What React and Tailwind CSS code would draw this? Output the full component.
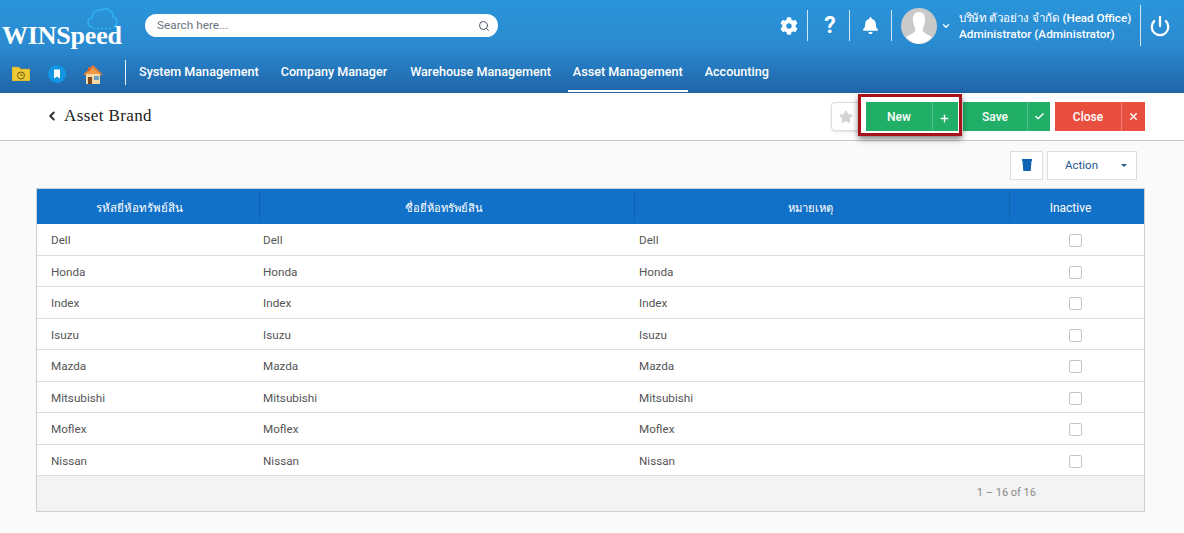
import React from 'react';
import { Check, X, Plus, Star, ChevronLeft, ChevronDown, Power, Search } from 'lucide-react';
import { FaCog, FaBell } from 'react-icons/fa';

const brands = ['Dell', 'Honda', 'Index', 'Isuzu', 'Mazda', 'Mitsubishi', 'Moflex', 'Nissan'];
const menus = [
  { label: 'System Management', cls: 'px-[11px]' },
  { label: 'Company Manager', cls: 'px-[11px]' },
  { label: 'Warehouse Management', cls: 'px-[11px] ml-[1px]' },
  { label: 'Asset Management', cls: 'border-b-2 border-white px-[5px] mx-[6px] pt-[2px]' },
  { label: 'Accounting', cls: 'px-[11px]' },
];
// header labels don't sit in the exact middle of their columns
const columns = [
  { label: 'รหัสยี่ห้อทรัพย์สิน', cls: 'pr-[18px] pt-[5px] text-[11.6px] font-medium' },
  { label: 'ชื่อยี่ห้อทรัพย์สิน', cls: 'pr-[6px] pt-[5px] text-[11.2px] font-medium' },
  { label: 'หมายเหตุ', cls: 'pr-[22px] pt-[5px] text-[11.2px] font-medium' },
  { label: 'Inactive', cls: 'pr-[12px] pt-[2px] text-xs' },
];

const Logo = () => (
  <div className="relative w-[125px] h-[50px] shrink-0">
    <svg className="absolute left-[85px] top-[4px]" width="34" height="24" viewBox="0 0 34 24" fill="none" stroke="#2fb2ee" strokeWidth="1.6">
      <path d="M8 21 C2 21 1 13 7 12 C7 6 13 3 17 4 C21 1 29 5 28 11 C33 12 33 20 28 21" />
      <path d="M8 22.5 H28" strokeDasharray="2 2" />
    </svg>
    <span className="absolute left-[2px] top-[18px] text-[26px] leading-[32px] font-bold text-white tracking-[-0.2px] font-['Liberation_Serif',serif]">WINSpeed</span>
  </div>
);

const Avatar = () => (
  <svg width="36" height="36" viewBox="0 0 36 36" className="rounded-full bg-[#c9c9c9] shrink-0">
    <path d="M18 4 C13 4 11.500 8 12 13 C12.500 17 14 20 14.500 22 C14 25 8 27 5 29 C8 33 13 36 18 36 C23 36 28 33 31 29 C28 27 22 25 21.500 22 C22 20 23.500 17 24 13 C24.500 8 23 4 18 4 Z" fill="#fff" />
  </svg>
);

const SplitButton = ({ label, icon, main, side, line, w }) => (
  <button className={`flex h-[29px] text-white text-xs font-medium ${main} ${w}`}>
    <span className="flex-1 h-full flex items-center justify-center">{label}</span>
    <span className={`h-full flex items-center justify-center border-l ${line} ${side}`}>{icon}</span>
  </button>
);

export default function App() {
  return (
    <div className="w-[1184px] h-[533px] overflow-hidden bg-[#fafafa] font-['Roboto','Noto_Sans',sans-serif]">
      <header className="h-[93px] bg-gradient-to-b from-[#2a95da] via-[#2a8ad0] to-[#2064a8] text-white">
        <div className="h-[54px] flex items-center">
          <Logo />
          <div className="ml-[20px] w-[353px] h-[23px] rounded-full bg-white flex items-center pl-[12px] pr-[8px] -mt-[3px]">
            <span className="flex-1 text-[11.8px] text-[#6b7280]">Search here...</span>
            <Search size={12} className="text-[#4b5563]" />
          </div>
          <div className="ml-auto flex items-center h-full -mt-[3px]">
            <FaCog size={18} className="mr-[9px]" />
            <div className="w-px h-[31px] bg-white/80" />
            <span className="w-[41px] pl-[3px] text-center text-[23px] leading-none font-bold">?</span>
            <div className="w-px h-[31px] bg-white/80" />
            <FaBell size={17} className="mx-[12px]" />
            <div className="w-px h-[31px] bg-white/80" />
            <div className="ml-[9px]"><Avatar /></div>
            <ChevronDown size={10} strokeWidth={3} className="ml-[4px]" />
            <div className="ml-[8px] w-[181px] text-[11.6px] font-medium leading-[16px]">
              <div className="whitespace-nowrap"><span className="tracking-[-0.35px]">บริษัท ตัวอย่าง จำกัด</span> (Head Office)</div>
              <div className="whitespace-nowrap text-[11.8px]">Administrator (Administrator)</div>
            </div>
            <div className="w-px h-[41px] bg-white/80" />
            <Power size={22} strokeWidth={2.5} className="ml-[8px] mr-[13px]" />
          </div>
        </div>
        <nav className="h-[39px] flex items-center">
          <div className="w-[125px] flex items-center shrink-0">
            <svg className="ml-[12px]" width="18" height="15" viewBox="0 0 18 15">
              <path d="M0 1 H7 L8.500 3 H18 V15 H0 Z" fill="#eec933" stroke="#b99a1f" strokeWidth="0.5" />
              <circle cx="9" cy="9.500" r="3.500" fill="none" stroke="#6b5a10" strokeWidth="1" />
              <path d="M9 7.500 V9.500 H11" fill="none" stroke="#6b5a10" strokeWidth="0.800" />
            </svg>
            <svg className="ml-[18px]" width="18" height="18" viewBox="0 0 18 18">
              <circle cx="9" cy="9" r="9" fill="#1296e4" />
              <path d="M6 4.500 H12 V13.500 L9 11.500 L6 13.500 Z" fill="#fff" />
            </svg>
            <svg className="ml-[17px]" width="20" height="20" viewBox="0 0 20 20">
              <path d="M3 10 H17 V20 H3 Z" fill="#f4d9a6" />
              <path d="M0 11 L10 1 L20 11 L17.500 11 L10 4 L2.500 11 Z" fill="#ef7d2d" />
              <path d="M5 3 H7.500 V6 L5 8 Z" fill="#d9622a" />
              <path d="M10 4 L17 10 H3 Z" fill="#f59a45" />
              <rect x="5" y="13" width="4" height="7" fill="#7a4a1e" />
              <rect x="11" y="12" width="5" height="4" fill="#6f9fc4" />
            </svg>
          </div>
          <div className="w-px h-[25px] bg-white/90 -mt-[3px]" />
          <div className="flex items-center h-full ml-[2px]">
            {menus.map((m) => (
              <div key={m.label} className={`h-full flex items-center -mt-[3px] text-[12.6px] font-medium whitespace-nowrap ${m.cls}`}>
                {m.label}
              </div>
            ))}
          </div>
        </nav>
      </header>

      <div className="h-[48px] bg-white border-b border-[#c8c8c8] flex items-center pl-[45px] pr-[39px]">
        <ChevronLeft size={14} strokeWidth={3.5} className="text-[#333] -mt-[2px]" />
        <h1 className="ml-[5px] -mt-[2px] text-[17px] tracking-[0.4px] text-[#222] font-['Liberation_Serif',serif]">Asset Brand</h1>
        <div className="ml-auto flex items-center gap-[5px]">
          <div className="w-[29px] h-[29px] border border-[#dddddd] rounded-l-[4px] bg-white flex items-center justify-center mr-[1px] shadow-sm">
            <Star size={14} fill="#d4d4d4" stroke="#d4d4d4" />
          </div>
          <div className="relative">
            <SplitButton label="New" main="bg-[#21ae67]" side="w-[26px] pr-[3px]" line="border-[#4cc187]" w="w-[92px]" icon={<Plus size={11} strokeWidth={3} className="mt-[3px]" />} />
            <div className="absolute -left-[8px] -top-[8px] w-[104px] h-[42px] border-[3px] border-[#a8121a] shadow-[0_3px_6px_rgba(0,0,0,0.5)] pointer-events-none" />
          </div>
          <SplitButton label="Save" main="bg-[#21ae67]" side="w-[23px]" line="border-[#4cc187]" w="w-[87px]" icon={<Check size={11} strokeWidth={3} />} />
          <SplitButton label="Close" main="bg-[#e94f3f]" side="w-[24px]" line="border-[#f08074]" w="w-[90px]" icon={<X size={11} strokeWidth={3} />} />
        </div>
      </div>

      <div className="flex justify-end items-center gap-[4px] h-[47px] pr-[47px] pt-[1px]">
        <button className="w-[33px] h-[29px] border border-[#dddddd] bg-white flex items-center justify-center">
          <svg width="10" height="12" viewBox="0 0 10 12">
            <path d="M0 0 H10 V2 H9.500 L8.700 12 H1.300 L0.500 2 H0 Z" fill="#1163b3" />
          </svg>
        </button>
        <button className="relative w-[90px] h-[29px] border border-[#dddddd] bg-white text-[11.5px] text-[#24578e] flex items-center justify-center pr-[21px] pt-[1px]">
          Action
          <span className="absolute right-[9px] top-[12px] border-x-[3px] border-x-transparent border-t-[3px] border-t-[#24578e]" />
        </button>
      </div>

      <div className="mx-[36px] w-[1109px] border border-[#cfcfcf] bg-white">
        <div className="grid grid-cols-[222px_375px_375px_1fr] h-[35px] bg-[#1170c7] text-white">
          {columns.map((c, i) => (
            <div key={c.label} className={`flex items-center justify-center relative ${c.cls}`}>
              {c.label}
              {i > 0 && <span className="absolute left-0 top-[3px] bottom-[3px] w-px bg-[#0f62ae]" />}
            </div>
          ))}
        </div>
        {brands.map((b) => (
          <div key={b} className="grid grid-cols-[222px_375px_375px_1fr] h-[31.5px] items-center border-b border-[#dcdcdc] text-[11.7px] text-[#555]">
            <div className="pl-[14px] pt-[4px]">{b}</div>
            <div className="pl-[4px] pt-[4px]">{b}</div>
            <div className="pl-[5px] pt-[4px]">{b}</div>
            <div className="flex justify-center pr-[2px] pt-[3px]">
              <span className="w-[13px] h-[13px] border border-[#c4c4c4] rounded-[2px] bg-white" />
            </div>
          </div>
        ))}
        <div className="h-[35px] bg-[#f3f3f3] flex items-center justify-end pr-[108px] text-[11px] text-[#8a8a8a]">
          1 – 16 of 16
        </div>
      </div>
    </div>
  );
}
